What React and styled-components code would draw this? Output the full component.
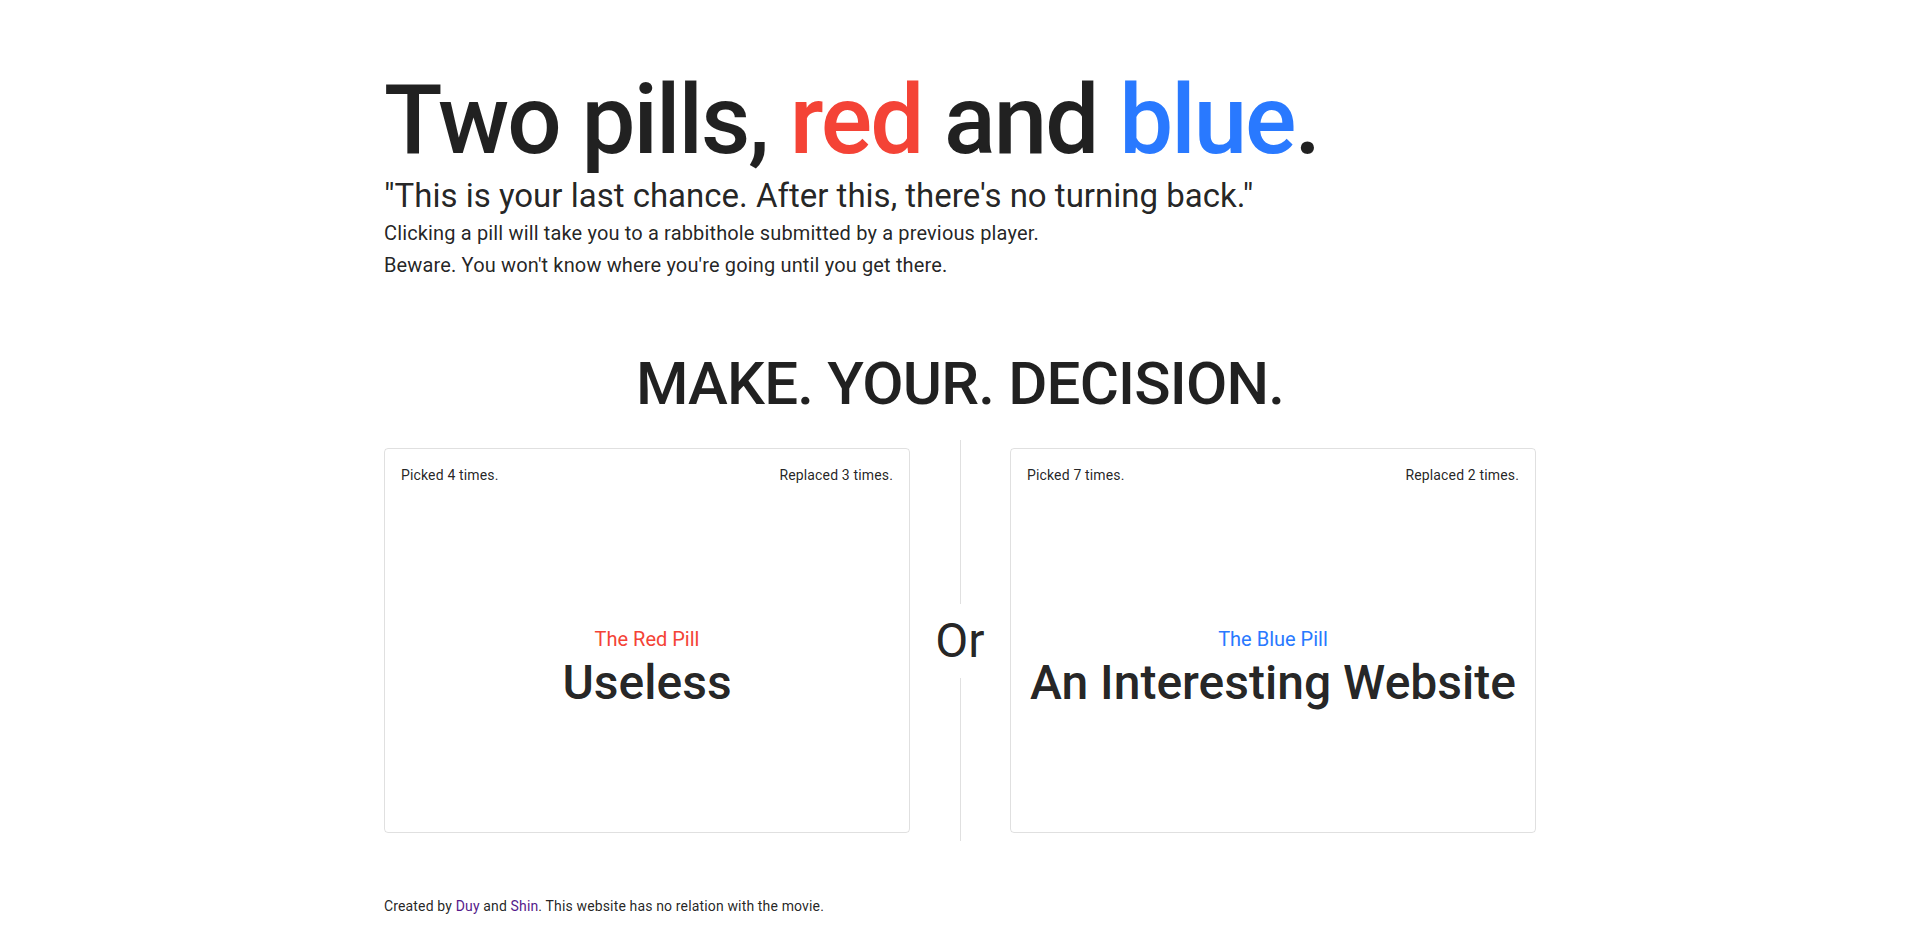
import React from "react";
import styled, { createGlobalStyle } from "styled-components";

const GlobalStyle = createGlobalStyle`
  html, body { margin: 0; padding: 0; background: #fff; }
  body {
    font-family: Roboto, "Noto Sans", Arial, sans-serif;
    color: rgba(0, 0, 0, 0.87);
  }
`;

const Page = styled.main`
  width: 1152px;
  margin: 0 auto;
  padding-top: 65px;
  box-sizing: border-box;
`;

const Title = styled.h1`
  margin: 0;
  font-size: 96px;
  font-weight: 500;
  line-height: 110px;
  letter-spacing: -2px;
`;

const Colored = styled.span`
  color: ${(p) => p.$color};
`;

const Quote = styled.h2`
  margin: 0;
  font-size: 33px;
  font-weight: 400;
  line-height: 42px;
  letter-spacing: 0;
`;

const Line = styled.p`
  margin: 0;
  font-size: 20px;
  line-height: 32px;
  letter-spacing: 0.15px;
`;

const Decision = styled.h2`
  margin: 67px 0 0;
  text-align: center;
  font-size: 60px;
  font-weight: 500;
  line-height: 72px;
  letter-spacing: -0.8px;
`;

const Row = styled.section`
  display: flex;
  align-items: center;
  margin-top: 20px;
  height: 401px;
`;

const Card = styled.div`
  flex: 1;
  height: 385px;
  box-sizing: border-box;
  border: 1px solid rgba(0, 0, 0, 0.12);
  border-radius: 4px;
  padding: 16px;
  display: flex;
  flex-direction: column;
  cursor: pointer;
`;

const Stats = styled.div`
  display: flex;
  justify-content: space-between;
  font-size: 14px;
  line-height: 20px;
  letter-spacing: 0.15px;
`;

const CardBody = styled.div`
  flex: 1;
  display: flex;
  flex-direction: column;
  align-items: center;
  justify-content: center;
  padding-top: 32px;
  text-align: center;
`;

const PillName = styled.div`
  color: ${(p) => p.$color};
  font-size: 20px;
  line-height: 32px;
`;

const Hole = styled.div`
  font-size: 48px;
  font-weight: 500;
  line-height: 56px;
`;

const Divider = styled.div`
  width: 100px;
  align-self: stretch;
  display: flex;
  flex-direction: column;
  align-items: center;
`;

const Rule = styled.div`
  flex: 1;
  width: 1px;
  background: rgba(0, 0, 0, 0.12);
`;

const OrText = styled.div`
  font-size: 48px;
  line-height: 56px;
  padding: 9px 0;
`;

const Footer = styled.footer`
  margin-top: 55px;
  font-size: 14px;
  line-height: 20px;
  letter-spacing: 0.15px;
`;

const Link = styled.a`
  color: #551a8b;
  text-decoration: none;
`;

const pills = [
  { name: "The Red Pill", color: "#f44336", title: "Useless", picked: 4, replaced: 3 },
  { name: "The Blue Pill", color: "#2979ff", title: "An Interesting Website", picked: 7, replaced: 2 },
];

function PillCard({ pill }) {
  return (
    <Card>
      <Stats>
        <span>Picked {pill.picked} times.</span>
        <span>Replaced {pill.replaced} times.</span>
      </Stats>
      <CardBody>
        <PillName $color={pill.color}>{pill.name}</PillName>
        <Hole>{pill.title}</Hole>
      </CardBody>
    </Card>
  );
}

export default function App() {
  return (
    <>
      <GlobalStyle />
      <Page>
        <Title>
          Two pills, <Colored $color="#f44336">red</Colored> and{" "}
          <Colored $color="#2979ff">blue</Colored>.
        </Title>
        <Quote>"This is your last chance. After this, there's no turning back."</Quote>
        <Line>Clicking a pill will take you to a rabbithole submitted by a previous player.</Line>
        <Line>Beware. You won't know where you're going until you get there.</Line>
        <Decision>MAKE. YOUR. DECISION.</Decision>
        <Row>
          <PillCard pill={pills[0]} />
          <Divider>
            <Rule />
            <OrText>Or</OrText>
            <Rule />
          </Divider>
          <PillCard pill={pills[1]} />
        </Row>
        <Footer>
          Created by <Link href="#">Duy</Link> and <Link href="#">Shin</Link>. This website has no
          relation with the movie.
        </Footer>
      </Page>
    </>
  );
}
